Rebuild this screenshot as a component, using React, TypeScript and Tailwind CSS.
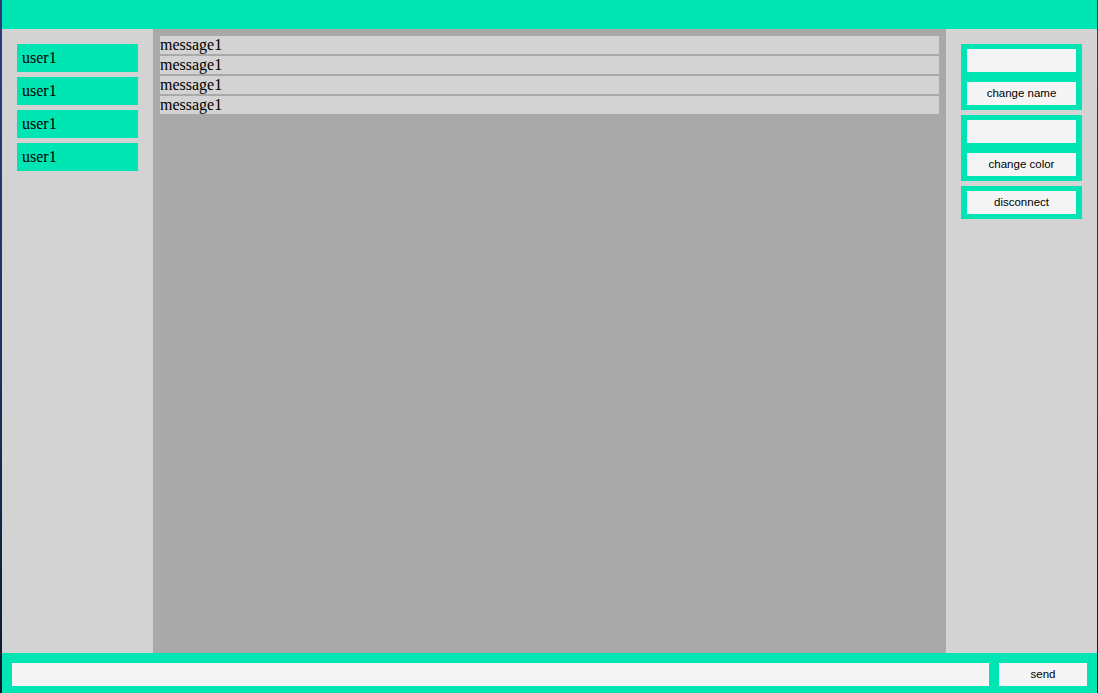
import React from "react";

const users = ["user1", "user1", "user1", "user1"];
const messages = ["message1", "message1", "message1", "message1"];

const serif = { fontFamily: '"Liberation Serif", "Times New Roman", serif' };
const sans = { fontFamily: '"Liberation Sans", Arial, sans-serif' };

function SideButton({ label }: { label: string }) {
  return (
    <button className="h-[23px] w-full bg-[#f5f5f5] pt-[1px] text-[11.5px] text-black" style={sans}>
      {label}
    </button>
  );
}

export default function App() {
  return (
    <div className="flex h-[693px] w-[1098px] bg-gradient-to-b from-[#2b3d78] via-[#203060] to-[#0e1a2e]">
      <div className="ml-[2px] mr-[1px] flex flex-1 flex-col">
        <header className="h-[29px] bg-[#00e5b4]" />

        <main className="flex h-[624px]">
          {/* user list */}
          <aside className="flex w-[151px] flex-col gap-[5px] bg-[#d3d3d3] px-[15px] pt-[15px]">
            {users.map((u, i) => (
              <div
                key={i}
                className="flex h-[28px] items-center bg-[#00e5b4] pl-[5px] text-[16px] text-black"
                style={serif}
              >
                {u}
              </div>
            ))}
          </aside>

          {/* messages */}
          <section className="flex flex-1 flex-col gap-[2px] bg-[#a9a9a9] px-[7px] pt-[7px]">
            {messages.map((m, i) => (
              <div
                key={i}
                className="flex h-[18px] items-center bg-[#d3d3d3] text-[16px] leading-[18px] text-black"
                style={serif}
              >
                {m}
              </div>
            ))}
          </section>

          {/* settings */}
          <aside className="flex w-[151px] flex-col gap-[5px] bg-[#d3d3d3] px-[15px] pt-[15px]">
            <div className="flex flex-col gap-[10px] bg-[#00e5b4] px-[6px] py-[5px]">
              <input className="h-[23px] w-full bg-[#f5f5f5] outline-none" />
              <SideButton label="change name" />
            </div>
            <div className="flex flex-col gap-[10px] bg-[#00e5b4] px-[6px] py-[5px]">
              <input className="h-[23px] w-full bg-[#f5f5f5] outline-none" />
              <SideButton label="change color" />
            </div>
            <div className="flex flex-col bg-[#00e5b4] px-[6px] py-[5px]">
              <SideButton label="disconnect" />
            </div>
          </aside>
        </main>

        <footer className="flex h-[40px] gap-[10px] bg-[#00e5b4] px-[10px] pt-[10px]">
          <input className="h-[23px] flex-1 bg-[#f5f5f5] outline-none" />
          <button className="h-[23px] w-[88px] bg-[#f5f5f5] pt-[1px] text-[11.5px] text-black" style={sans}>
            send
          </button>
        </footer>
      </div>
    </div>
  );
}
